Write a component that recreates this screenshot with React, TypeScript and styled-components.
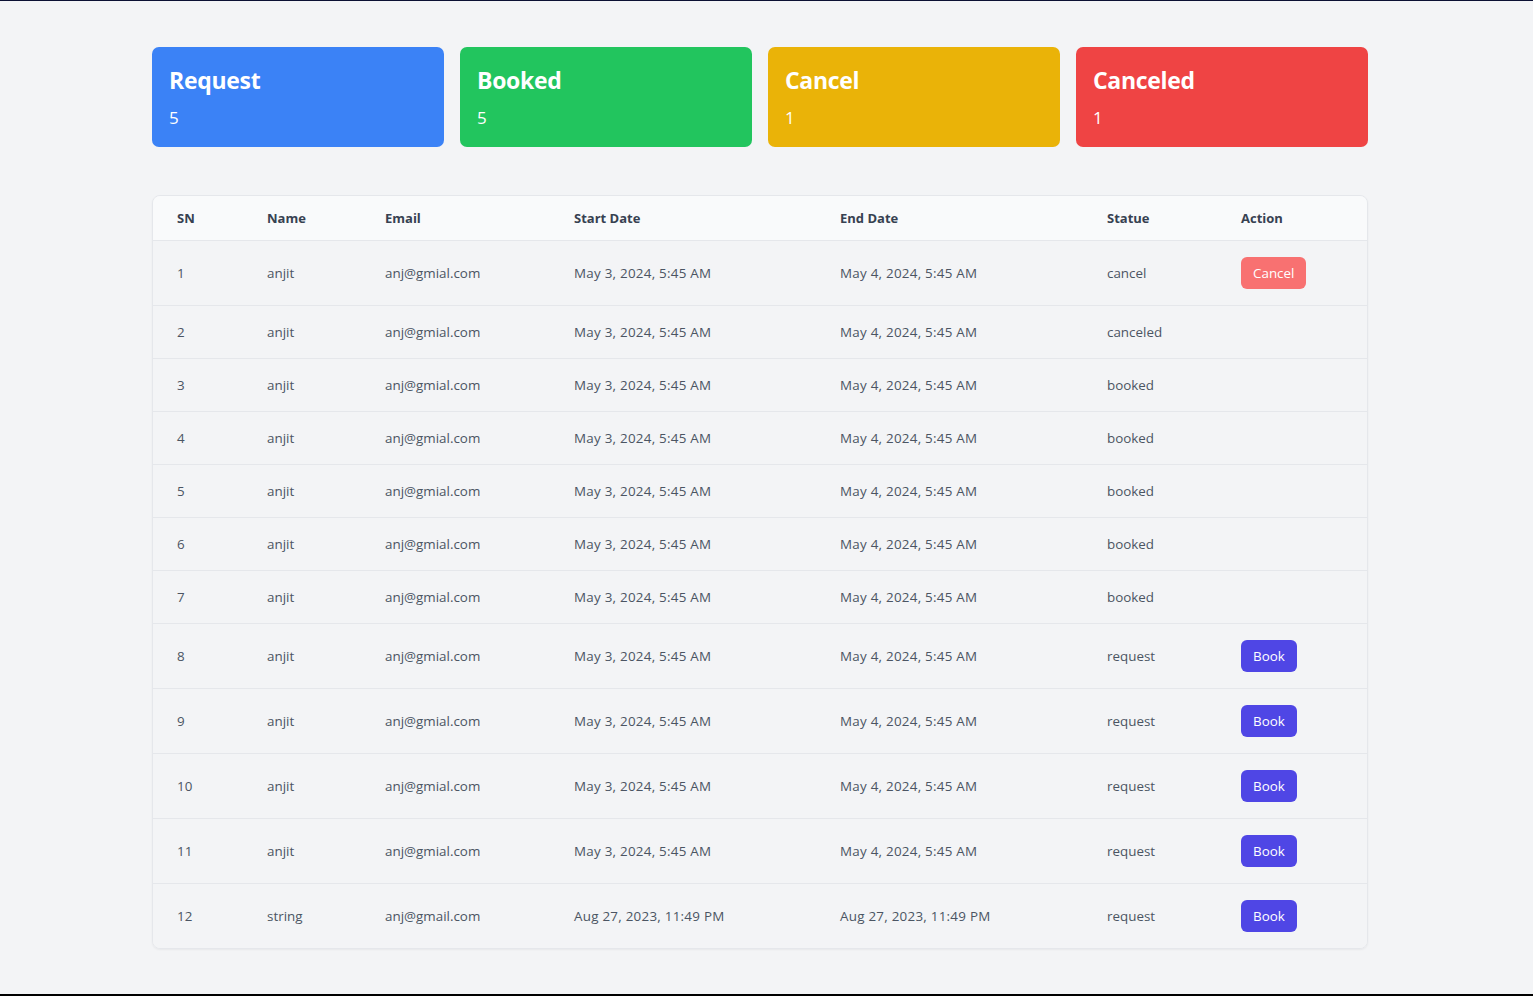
import React from "react";
import styled, { createGlobalStyle } from "styled-components";

type Status = "request" | "booked" | "cancel" | "canceled";

interface Booking {
  sn: number;
  name: string;
  email: string;
  start: string;
  end: string;
  status: Status;
}

const GlobalStyle = createGlobalStyle`
  html, body {
    margin: 0;
    padding: 0;
    background: #f3f4f6;
  }
  body {
    font-family: "Open Sans", "Noto Sans", "Liberation Sans", sans-serif;
    color: #4b5563;
  }
  * {
    box-sizing: border-box;
  }
`;

const Page = styled.div`
  min-height: 996px;
  border-top: 1px solid #0b1033;
  border-bottom: 2px solid #000;
  padding: 46px 0 0 152px;
`;

const Container = styled.div`
  width: 1216px;
`;

const CardRow = styled.div`
  display: grid;
  grid-template-columns: repeat(4, 1fr);
  gap: 16px;
`;

const StatCard = styled.div<{ $bg: string }>`
  background: ${(p) => p.$bg};
  border-radius: 7px;
  height: 100px;
  padding: 17px 17px 0;
  color: #fff;
`;

const CardTitle = styled.div`
  font-size: 23px;
  font-weight: 700;
  line-height: 32px;
  letter-spacing: -0.3px;
`;

const CardCount = styled.div`
  margin-top: 8px;
  font-size: 17px;
  line-height: 28px;
`;

const TableWrap = styled.div`
  margin-top: 48px;
  border: 1px solid #e5e7eb;
  border-radius: 8px;
  overflow: hidden;
  box-shadow: 0 1px 2px rgba(0, 0, 0, 0.05);
`;

const Table = styled.table`
  width: 100%;
  border-collapse: collapse;
  table-layout: fixed;
`;

const HeadRow = styled.tr`
  background: #f9fafb;
`;

const Th = styled.th`
  text-align: left;
  font-size: 13px;
  font-weight: 700;
  color: #374151;
  padding: 12px 0 12px 24px;
  line-height: 20px;
  border-bottom: 1px solid #e5e7eb;
`;

const Row = styled.tr`
  background: #f3f4f6;
  & + & td {
    border-top: 1px solid #e5e7eb;
  }
`;

const Td = styled.td`
  font-size: 13.4px;
  color: #4b5563;
  padding: 16px 0 16px 24px;
  line-height: 20px;
  height: 52px;
  white-space: nowrap;
`;

const DateText = styled.span`
  letter-spacing: 0.25px;
`;

const ActionButton = styled.button<{ $variant: "book" | "cancel" }>`
  font-family: inherit;
  font-size: 13.4px;
  line-height: 20px;
  color: #fff;
  border: none;
  border-radius: 6px;
  height: 32px;
  padding: 0 12px;
  cursor: pointer;
  background: ${(p) => (p.$variant === "book" ? "#4f46e5" : "#f87171")};
`;

const cards = [
  { title: "Request", count: 5, bg: "#3b82f6" },
  { title: "Booked", count: 5, bg: "#22c55e" },
  { title: "Cancel", count: 1, bg: "#eab308" },
  { title: "Canceled", count: 1, bg: "#ef4444" },
];

const statuses: Status[] = [
  "cancel",
  "canceled",
  "booked",
  "booked",
  "booked",
  "booked",
  "booked",
  "request",
  "request",
  "request",
  "request",
];

const bookings: Booking[] = [
  ...statuses.map((status, i) => ({
    sn: i + 1,
    name: "anjit",
    email: "anj@gmial.com",
    start: "May 3, 2024, 5:45 AM",
    end: "May 4, 2024, 5:45 AM",
    status,
  })),
  {
    sn: 12,
    name: "string",
    email: "anj@gmail.com",
    start: "Aug 27, 2023, 11:49 PM",
    end: "Aug 27, 2023, 11:49 PM",
    status: "request",
  },
];

const columns = [
  { label: "SN", width: 90 },
  { label: "Name", width: 118 },
  { label: "Email", width: 189 },
  { label: "Start Date", width: 266 },
  { label: "End Date", width: 267 },
  { label: "Statue", width: 134 },
  { label: "Action", width: 150 },
];

const renderAction = (status: Status) => {
  if (status === "request") return <ActionButton $variant="book">Book</ActionButton>;
  if (status === "cancel") return <ActionButton $variant="cancel">Cancel</ActionButton>;
  return null;
};

const App = () => {
  return (
    <>
      <GlobalStyle />
      <Page>
        <Container>
          <CardRow>
            {cards.map((c) => (
              <StatCard key={c.title} $bg={c.bg}>
                <CardTitle>{c.title}</CardTitle>
                <CardCount>{c.count}</CardCount>
              </StatCard>
            ))}
          </CardRow>

          <TableWrap>
            <Table>
              <colgroup>
                {columns.map((col) => (
                  <col key={col.label} style={{ width: col.width }} />
                ))}
              </colgroup>
              <thead>
                <HeadRow>
                  {columns.map((col) => (
                    <Th key={col.label}>{col.label}</Th>
                  ))}
                </HeadRow>
              </thead>
              <tbody>
                {bookings.map((b) => (
                  <Row key={b.sn}>
                    <Td>{b.sn}</Td>
                    <Td>{b.name}</Td>
                    <Td>{b.email}</Td>
                    <Td>
                      <DateText>{b.start}</DateText>
                    </Td>
                    <Td>
                      <DateText>{b.end}</DateText>
                    </Td>
                    <Td>{b.status}</Td>
                    <Td>{renderAction(b.status)}</Td>
                  </Row>
                ))}
              </tbody>
            </Table>
          </TableWrap>
        </Container>
      </Page>
    </>
  );
};

export default App;
